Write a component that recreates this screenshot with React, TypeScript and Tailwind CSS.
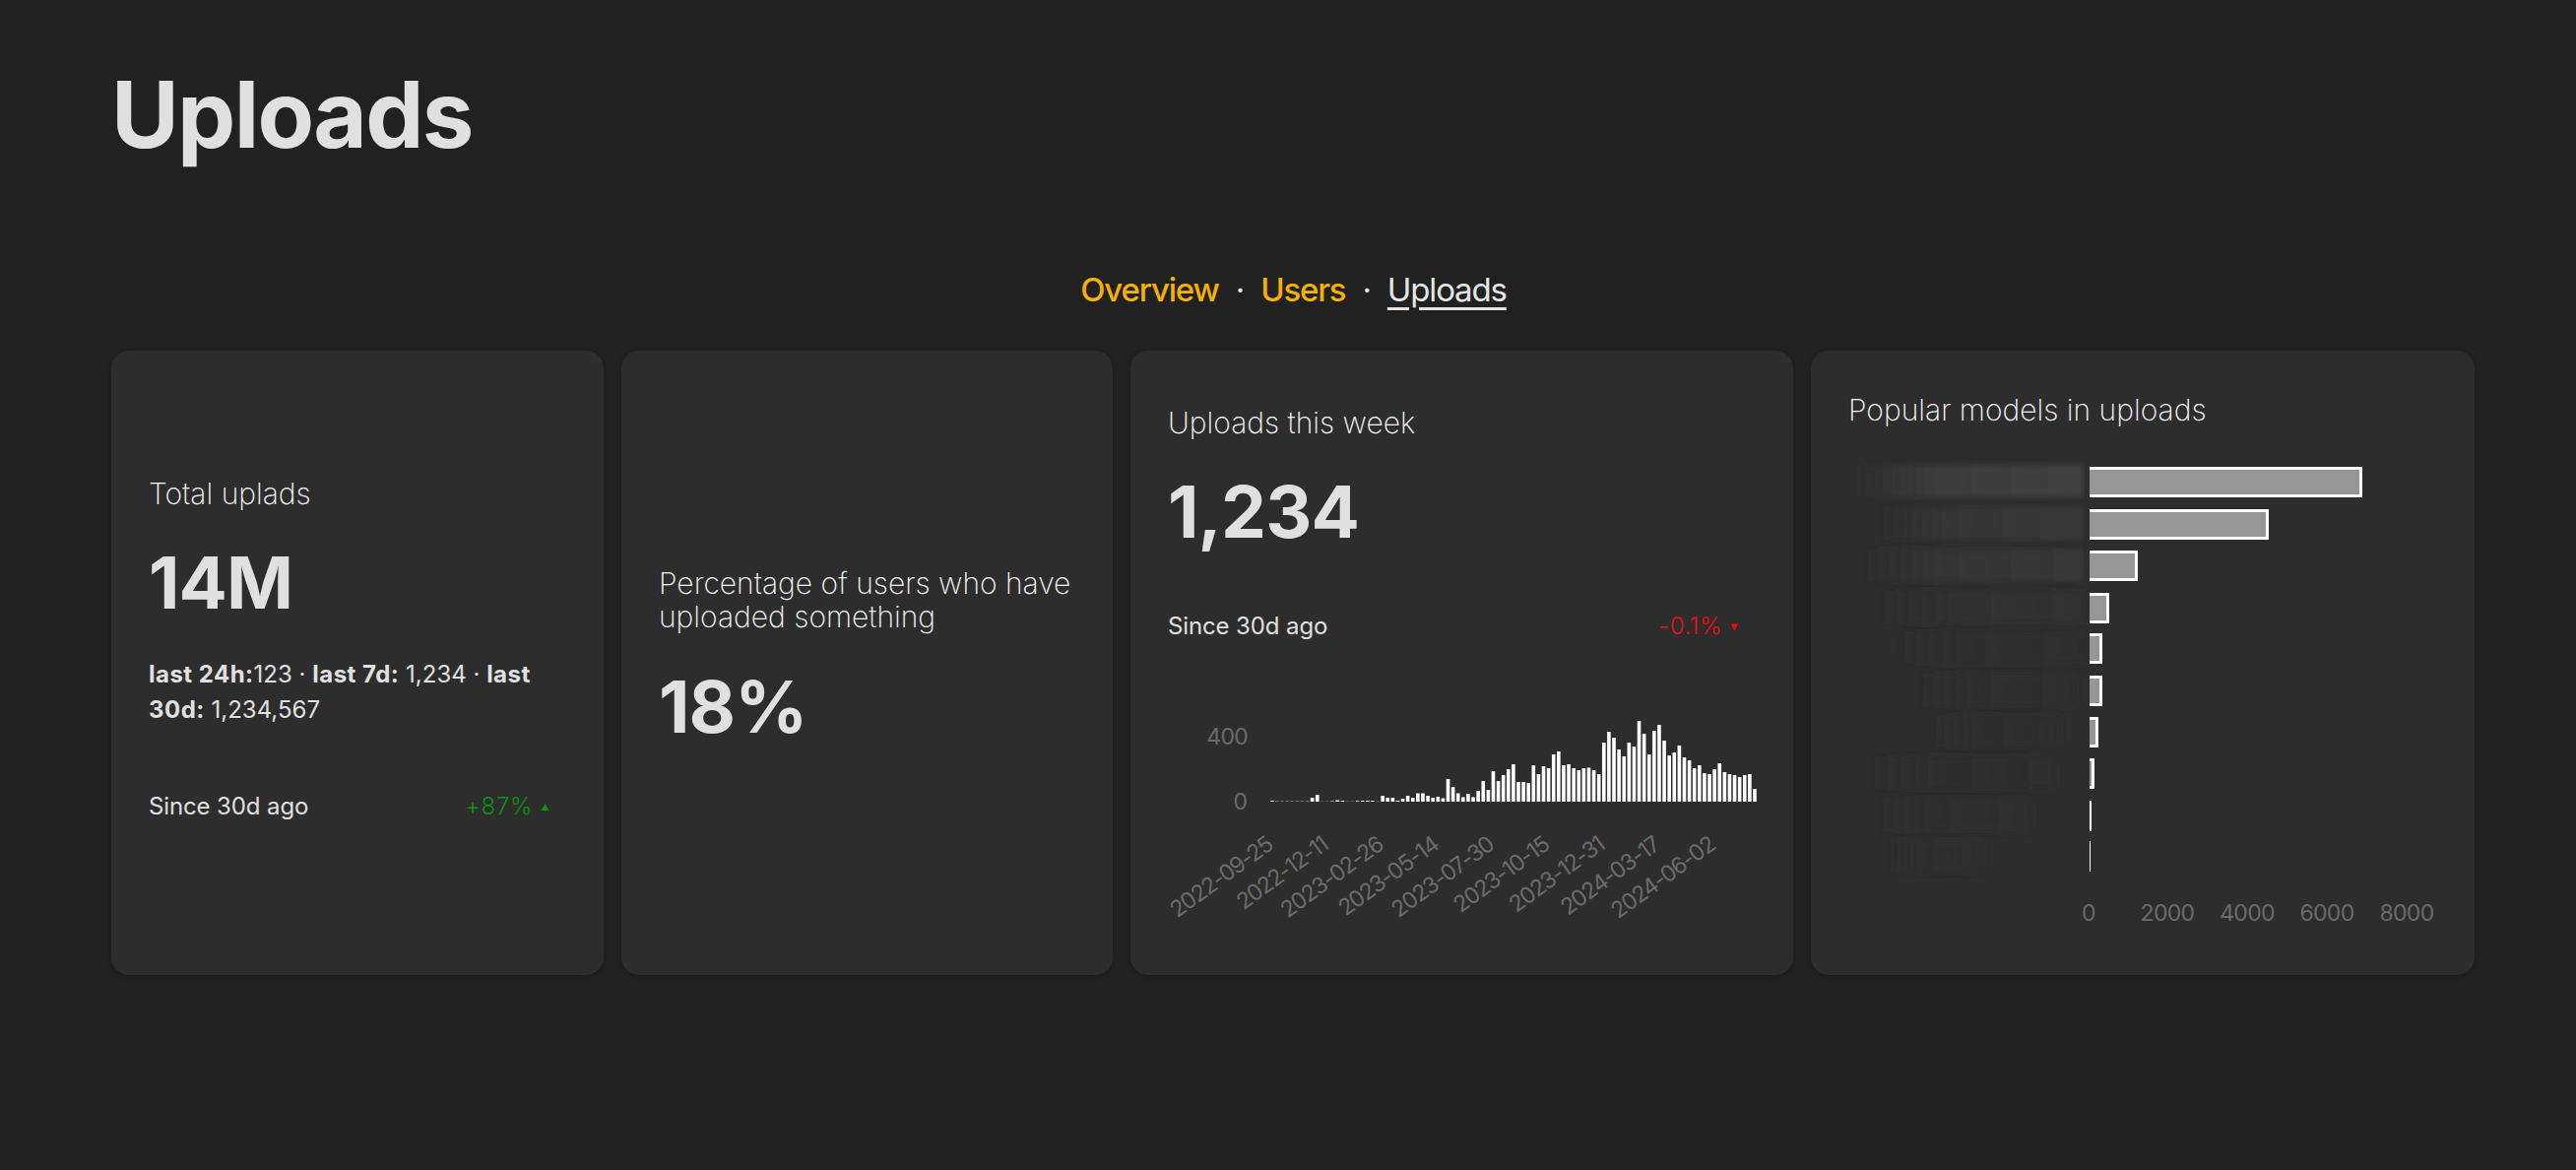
const WEEKLY = [
  1, 0.3, 0.3, 0.3, 0.3, 0.3, 0.3, 0.3, 4, 7, 0.2, 0.2, 0.5, 1.5, 1, 0.2, 0.2, 0.7, 1, 1, 1, 0.2, 6, 4, 4, 1, 3, 6, 4, 8.5, 8.5, 6, 4,
  5, 3.5, 23, 15, 8.5, 4.5, 8, 4.5, 11, 21, 12, 31, 21, 27, 33, 38, 20, 20, 19, 37, 28, 36, 34, 48, 51, 37, 38, 34, 32, 34, 34.5, 32,
  28, 60, 71, 65, 53, 46, 60, 56, 82, 69, 48, 72, 78, 62, 47, 50, 57, 45, 42, 34, 37, 29, 28, 33, 39, 30, 28, 27, 25, 27, 28, 13,
]

const DATES = ['2022-09-25', '2022-12-11', '2023-02-26', '2023-05-14', '2023-07-30', '2023-10-15', '2023-12-31', '2024-03-17', '2024-06-02']

const MODELS = [
  { y: 24, w: 277, ghost: '#414141', gx: 4, gw: 235 },
  { y: 67, w: 182, ghost: '#393939', gx: 30, gw: 209 },
  { y: 109, w: 49, ghost: '#383838', gx: 14, gw: 225 },
  { y: 152, w: 20, ghost: '#323232', gx: 30, gw: 209 },
  { y: 193, w: 13, ghost: '#2f2f2f', gx: 50, gw: 189 },
  { y: 236, w: 13, ghost: '#2f2f2f', gx: 70, gw: 160 },
  { y: 278, w: 9, ghost: '#2e2e2e', gx: 84, gw: 130 },
  { y: 320, w: 5, ghost: '#2e2e2e', gx: 20, gw: 190 },
  { y: 363, w: 2, ghost: '#2f2f2f', gx: 30, gw: 156 },
  { y: 404, w: 1, ghost: '#2f2f2f', gx: 40, gw: 96 },
]

const TICKS = [
  { label: '0', x: 244 },
  { label: '2000', x: 324 },
  { label: '4000', x: 405 },
  { label: '6000', x: 486 },
  { label: '8000', x: 567 },
]

const cardClass = 'rounded-[18px] bg-[#2d2d2d] px-[38px] shadow-[0_1px_4px_rgba(0,0,0,0.22)]'
const titleClass = 'text-[30px] font-extralight leading-[34px] text-[#f5f5f5]'
const metricClass = 'text-[73px] font-bold leading-[80px] tracking-[-0.012em] text-[#e0e0e0]'

function Delta({ value, up }: { value: string; up?: boolean }) {
  return (
    <div className="flex items-center justify-between pr-[17px] text-[24px] leading-9 tracking-[-0.005em] text-[#e0e0e0]">
      <span>Since 30d ago</span>
      <span className={up ? 'flex items-center gap-2 font-light tracking-[0.025em] text-[#0c920c]' : 'flex items-center gap-2 font-light tracking-[0.025em] text-[#f00d0d]'}>
        {value}
        <svg width="9" height="9" viewBox="0 0 9 9" fill="currentColor">
          {up ? <path d="M4.5 1 8.5 8H.5z" /> : <path d="M.7 1.5h7.6L4.5 8.5z" />}
        </svg>
      </span>
    </div>
  )
}

function WeeklyChart() {
  return (
    <svg width="600" height="280" className="mt-[46px] overflow-visible" style={{ fontFamily: 'Inter, sans-serif' }}>
      {WEEKLY.map((h, i) => (
        <rect key={i} x={104 + i * 5.106} y={114 - h} width="3.6" height={h} fill="#ffffff" />
      ))}
      <text x="81" y="56" textAnchor="end" fontSize="23" letterSpacing="-0.7" fill="#6b6b6b">400</text>
      <text x="81" y="122" textAnchor="end" fontSize="23" fill="#6b6b6b">0</text>
      {DATES.map((d, i) => {
        const x = 108 + i * 56.16
        return (
          <text key={d} x={x} y="161" textAnchor="end" fontSize="23" letterSpacing="-1.2" fill="#6b6b6b" transform={`rotate(-36 ${x} 161)`}>
            {d}
          </text>
        )
      })}
    </svg>
  )
}

function ModelsChart() {
  return (
    <svg width="597" height="510" className="mt-[17px]" style={{ fontFamily: 'Inter, sans-serif' }}>
      <defs>
        <filter id="ghost" x="-10%" y="-30%" width="120%" height="160%">
          <feGaussianBlur stdDeviation="3" />
        </filter>
        {MODELS.map((m, i) => (
          <linearGradient key={i} id={`fade-${i}`}>
            <stop offset="0" stopColor={m.ghost} stopOpacity="0" />
            <stop offset="0.35" stopColor={m.ghost} stopOpacity="0.7" />
            <stop offset="1" stopColor={m.ghost} />
          </linearGradient>
        ))}
      </defs>
      {MODELS.map((m, i) => (
        <rect key={i} x={m.gx} y={m.y - 2} width={m.gw} height="33" rx="4" fill={`url(#fade-${i})`} filter="url(#ghost)" />
      ))}
      <rect x="240" y="0" width="5" height="445" fill="#2d2d2d" />
      {MODELS.map((m, i) => (
        <g key={i}>
          <rect x="245" y={m.y} width={m.w} height="31" fill="#ffffff" />
          {m.w > 4 && <rect x="245" y={m.y + 3} width={m.w - 3} height="25" fill="#969696" />}
        </g>
      ))}
      {TICKS.map((t) => (
        <text key={t.label} x={t.x} y="485" textAnchor="middle" fontSize="23" letterSpacing="-0.7" fill="#6b6b6b">
          {t.label}
        </text>
      ))}
    </svg>
  )
}

export default function App() {
  return (
    <div className="h-screen overflow-hidden bg-[#212121] px-[113px] pt-[66px] font-['Inter',sans-serif]">
      <h1 className="text-[94px] font-bold leading-[100px] tracking-[-0.018em] text-[#e0e0e0]">Uploads</h1>

      <nav className="mt-[108px] flex justify-center pl-[11px] text-[33px] leading-10 tracking-[-0.035em] text-[#e6e6e6]">
        <a className="font-medium text-[#f5b000]">Overview</a>
        <span className="px-[17px]">·</span>
        <a className="font-medium text-[#f5b000]">Users</a>
        <span className="px-[17px]">·</span>
        <a className="underline underline-offset-[6px]">Uploads</a>
      </nav>

      <div className="mt-[42px] grid h-[634px] grid-cols-[500px_499px_673px_674px] gap-[18px]">
        <div className={`${cardClass} pt-[128px]`}>
          <p className={titleClass}>Total uplads</p>
          <p className={`${metricClass} mt-[34px]`}>14M</p>
          <p className="mt-[35px] text-[24px] leading-9 text-[#e0e0e0]">
            <b className="tracking-[0.02em]">last 24h:</b>123 · <b className="tracking-[0.02em]">last 7d:</b> 1,234 · <b className="tracking-[0.02em]">last 30d:</b> 1,234,567
          </p>
          <div className="mt-[62px]">
            <Delta value="+87%" up />
          </div>
        </div>

        <div className={`${cardClass} pt-[219px]`}>
          <p className={titleClass}>Percentage of users who have uploaded something</p>
          <p className={`${metricClass} mt-[35px]`}>18%</p>
        </div>

        <div className={`${cardClass} pt-[56px]`}>
          <p className={titleClass}>Uploads this week</p>
          <p className={`${metricClass} mt-[34px]`}>1,234</p>
          <div className="mt-[58px]">
            <Delta value="-0.1%" />
          </div>
          <WeeklyChart />
        </div>

        <div className={`${cardClass} pt-[43px]`}>
          <p className={titleClass}>Popular models in uploads</p>
          <ModelsChart />
        </div>
      </div>
    </div>
  )
}
